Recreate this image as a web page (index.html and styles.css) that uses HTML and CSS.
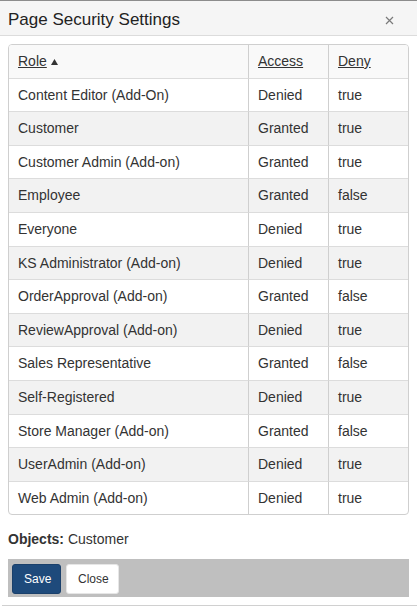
FILE: index.html
```html
<!DOCTYPE html>
<html>
<head>
<meta charset="utf-8">
<link rel="stylesheet" href="styles.css">
</head>
<body>
<div class="modal">
  <div class="modal-header">
    <span class="title">Page Security Settings</span>
    <svg class="close-x" width="9" height="9" viewBox="0 0 9 9"><path d="M1 1L8 8M8 1L1 8" stroke="#7a7a7a" stroke-width="1.2"/></svg>
  </div>
  <div class="modal-body">
    <table class="grid">
      <thead>
        <tr>
          <th class="c-role"><a>Role</a><svg class="sort" width="7" height="6" viewBox="0 0 7 6"><path d="M3.5 0L7 6H0z" fill="#333"/></svg></th>
          <th class="c-access"><a>Access</a></th>
          <th class="c-deny"><a>Deny</a></th>
        </tr>
      </thead>
      <tbody>
        <tr><td>Content Editor (Add-On)</td><td>Denied</td><td>true</td></tr>
        <tr><td>Customer</td><td>Granted</td><td>true</td></tr>
        <tr><td>Customer Admin (Add-on)</td><td>Granted</td><td>true</td></tr>
        <tr><td>Employee</td><td>Granted</td><td>false</td></tr>
        <tr><td>Everyone</td><td>Denied</td><td>true</td></tr>
        <tr><td>KS Administrator (Add-on)</td><td>Denied</td><td>true</td></tr>
        <tr><td>OrderApproval (Add-on)</td><td>Granted</td><td>false</td></tr>
        <tr><td>ReviewApproval (Add-on)</td><td>Denied</td><td>true</td></tr>
        <tr><td>Sales Representative</td><td>Granted</td><td>false</td></tr>
        <tr><td>Self-Registered</td><td>Denied</td><td>true</td></tr>
        <tr><td>Store Manager (Add-on)</td><td>Granted</td><td>false</td></tr>
        <tr><td>UserAdmin (Add-on)</td><td>Denied</td><td>true</td></tr>
        <tr><td>Web Admin (Add-on)</td><td>Denied</td><td>true</td></tr>
      </tbody>
    </table>
    <p class="objects"><b>Objects:</b> Customer</p>
    <div class="actions">
      <button class="btn btn-primary">Save</button>
      <button class="btn btn-default">Close</button>
    </div>
  </div>
</div>
</body>
</html>
```

FILE: styles.css
```css
* { box-sizing: border-box; }
html, body {
  margin: 0;
  padding: 0;
  background: #fff;
}
body {
  font-family: "Liberation Sans", Arial, sans-serif;
  font-size: 14px;
  color: #333;
}
.modal {
  width: 417px;
  height: 609px;
  border-top: 1px solid #8c8c8c;
}
.modal-header {
  height: 35px;
  background: #f5f5f5;
  border-bottom: 1px solid #dcdcdc;
  display: flex;
  align-items: center;
  justify-content: space-between;
  padding: 4px 23px 0 8px;
}
.title {
  font-size: 17px;
  color: #222;
  line-height: 20px;
}
.close-x { display: block; }
.modal-body {
  margin-left: 2px;
  padding: 8px 8px 8px 6px;
  border-bottom: 1px solid #d0d0d0;
}
.grid {
  width: 401px;
  border: 1px solid #cfcfcf;
  border-radius: 4px;
  border-spacing: 0;
  border-collapse: separate;
  overflow: hidden;
  table-layout: fixed;
}
.grid th, .grid td {
  text-align: left;
  font-weight: normal;
  padding: 8px 9px;
  line-height: 16.6px;
  height: 33.6px;
  border-top: 1px solid #dcdcdc;
  border-left: 1px solid #cfcfcf;
}
.grid thead th {
  border-top: none;
  height: 32px;
  background: #f9f9f9;
  padding-top: 8px;
}
.grid th:first-child, .grid td:first-child { border-left: none; }
.c-access, .c-deny { width: 80px; }
.grid th a {
  color: #333;
  text-decoration: underline;
}
.sort { margin-left: 4px; vertical-align: 1px; }
.grid tbody tr:nth-child(even) td { background: #f2f2f2; }
.objects {
  margin: 15px 0 0 0;
  line-height: 18px;
}
.actions {
  margin-top: 11px;
  background: #bfbfbf;
  padding: 5px 4px 3px 4px;
  display: flex;
  gap: 5px;
  width: 401px;
}
.btn {
  font-family: "Liberation Sans", Arial, sans-serif;
  font-size: 12px;
  height: 30px;
  border-radius: 3px;
  padding: 0 11px;
  cursor: pointer;
}
.btn-primary {
  background: #1e4a7b;
  color: #fff;
  border: 1px solid #1a406b;
  width: 49px;
}
.btn-default {
  background: #fff;
  color: #333;
  border: 1px solid #e6e6e6;
  width: 53px;
}
```
